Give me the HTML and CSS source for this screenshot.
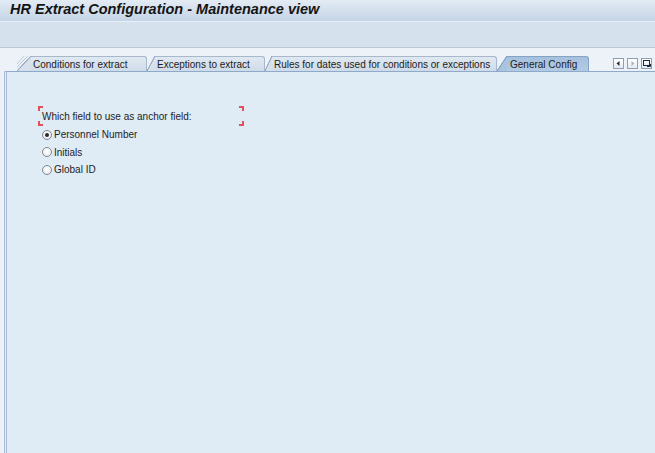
FILE: index.html
```html
<!DOCTYPE html>
<html>
<head>
<meta charset="utf-8">
<link rel="stylesheet" href="styles.css">
</head>
<body>
<div class="titlebar"><h1 class="title">HR Extract Configuration - Maintenance view</h1></div>
<div class="toolbar"></div>
<div class="main">
  <div class="tabstrip">
    <div class="tabs">
      <div class="tab t1">Conditions for extract</div>
      <div class="tab t2">Exceptions to extract</div>
      <div class="tab t3">Rules for dates used for conditions or exceptions</div>
      <div class="tab t4 active">General Config</div>
    </div>
    <div class="navbtns">
      <span class="nb"><svg width="9" height="9" viewBox="0 0 9 9"><path d="M5.5 2 L2.5 4.5 L5.5 7 Z" fill="#1f2a36"/></svg></span>
      <span class="nb"><svg width="9" height="9" viewBox="0 0 9 9"><path d="M3.5 2 L6.5 4.5 L3.5 7 Z" fill="#a9b6c4"/></svg></span>
      <span class="nb"><svg width="9" height="9" viewBox="0 0 9 9"><rect x="1.5" y="1.5" width="6" height="5" fill="none" stroke="#1f2a36" stroke-width="1"/><path d="M5 7.5 H8.5 V5" fill="none" stroke="#1f2a36" stroke-width="1"/></svg></span>
    </div>
  </div>
  <div class="panel">
    <div class="group">
      <div class="frame">Which field to use as anchor field:</div>
      <div class="options">
        <div class="opt"><span class="rb checked"></span>Personnel Number</div>
        <div class="opt"><span class="rb"></span>Initials</div>
        <div class="opt"><span class="rb"></span>Global ID</div>
      </div>
    </div>
  </div>
</div>
</body>
</html>
```
FILE: styles.css
```css
html, body {
  margin: 0;
  padding: 0;
}
body {
  width: 655px;
  height: 453px;
  overflow: hidden;
  background: #edf2f8;
  font-family: "Liberation Sans", Arial, sans-serif;
  font-size: 10px;
  color: #1e1e1e;
}
.titlebar {
  height: 21px;
  background: linear-gradient(#e3ebf4, #c5d4e6);
}
.title {
  margin: 0;
  padding-left: 10px;
  font-size: 14.5px;
  line-height: 19px;
  font-weight: bold;
  font-style: italic;
  color: #141414;
}
.toolbar {
  height: 25px;
  background: #d5e1ed;
  border-top: 1px solid #e9eff6;
  border-bottom: 1px solid #b9c8d8;
}
.main {
  display: flex;
  flex-direction: column;
  height: 405px;
}
.tabstrip {
  display: flex;
  justify-content: space-between;
  align-items: flex-start;
  margin-top: 8px;
  height: 15px;
}
.tabs {
  display: flex;
  padding-left: 17px;
}
.tab {
  position: relative;
  height: 15px;
  line-height: 15px;
  padding-left: 2px;
  box-sizing: border-box;
  background: linear-gradient(#e0e9f2, #cfdbe8);
  border-top: 1px solid #a7b8cb;
  border-right: 1px solid #a7b8cb;
  border-top-right-radius: 3px;
  color: #1b1b1b;
  white-space: nowrap;
}
.tab::before {
  content: "";
  position: absolute;
  top: -1px;
  bottom: 0;
  right: 100%;
  background: linear-gradient(to bottom right, transparent calc(50% - 0.8px), #97abc3 calc(50% - 0.3px), #97abc3 calc(50% + 0.3px), #d6e1ec calc(50% + 0.8px));
}
.t1 { margin-left: 14px; width: 116px; }
.t1::before {
  width: 14px;
  background:
    linear-gradient(to bottom right, transparent calc(50% - 0.8px), #97abc3 calc(50% - 0.3px), #97abc3 calc(50% + 0.3px), #d6e1ec calc(50% + 0.8px)),
    linear-gradient(to bottom right, transparent calc(38% - 0.6px), #b4bcc6 38%, transparent calc(38% + 0.6px)),
    linear-gradient(to bottom right, transparent calc(26% - 0.6px), #b4bcc6 26%, transparent calc(26% + 0.6px));
}
.t2 { margin-left: 8px; width: 110px; }
.t2::before { width: 8px; }
.t3 { margin-left: 7px; width: 225px; }
.t3::before { width: 7px; }
.t4 { margin-left: 10px; width: 82px; padding-left: 3px; }
.t4::before {
  width: 10px;
  background: linear-gradient(to bottom right, transparent calc(50% - 0.8px), #86a2c3 calc(50% - 0.3px), #86a2c3 calc(50% + 0.3px), #aac4e0 calc(50% + 0.8px));
}
.tab.active {
  background: linear-gradient(#a6c1de, #b2cbe5);
  border-color: #87a3c4;
}
.navbtns {
  display: flex;
  gap: 3px;
  margin-top: 2px;
  margin-right: 3px;
}
.nb {
  width: 11px;
  height: 11px;
  box-sizing: border-box;
  border: 1px solid #8c9fb6;
  background: linear-gradient(#ffffff, #e3eaf2);
  display: flex;
  align-items: center;
  justify-content: center;
}
.nb svg { display: block; }
.panel {
  flex: 1;
  margin-left: 4px;
  border-top: 1px solid #8ea9ca;
  border-left: 3px double #a9bdd6;
  background: #dfebf5;
}
.group {
  padding: 34px 0 0 31px;
}
.frame {
  width: 206px;
  height: 20px;
  box-sizing: border-box;
  padding-left: 4px;
  line-height: 21px;
  --c: #e0505b;
  background:
    linear-gradient(var(--c), var(--c)) left top / 5px 2px no-repeat,
    linear-gradient(var(--c), var(--c)) left top / 2px 5px no-repeat,
    linear-gradient(var(--c), var(--c)) right top / 5px 2px no-repeat,
    linear-gradient(var(--c), var(--c)) right top / 2px 5px no-repeat,
    linear-gradient(var(--c), var(--c)) left bottom / 5px 2px no-repeat,
    linear-gradient(var(--c), var(--c)) left bottom / 2px 5px no-repeat,
    linear-gradient(var(--c), var(--c)) right bottom / 5px 2px no-repeat,
    linear-gradient(var(--c), var(--c)) right bottom / 2px 5px no-repeat;
}
.options {
  padding-left: 4px;
}
.opt {
  display: flex;
  align-items: center;
  height: 17.5px;
}
.rb {
  width: 10px;
  height: 10px;
  box-sizing: border-box;
  border-radius: 50%;
  border: 1px solid #7d8996;
  background: radial-gradient(circle at 50% 40%, #ffffff, #e4e7ea);
  margin-right: 2px;
  display: flex;
  align-items: center;
  justify-content: center;
}
.rb.checked::after {
  content: "";
  width: 4px;
  height: 4px;
  border-radius: 50%;
  background: #2a2a2a;
}
```
